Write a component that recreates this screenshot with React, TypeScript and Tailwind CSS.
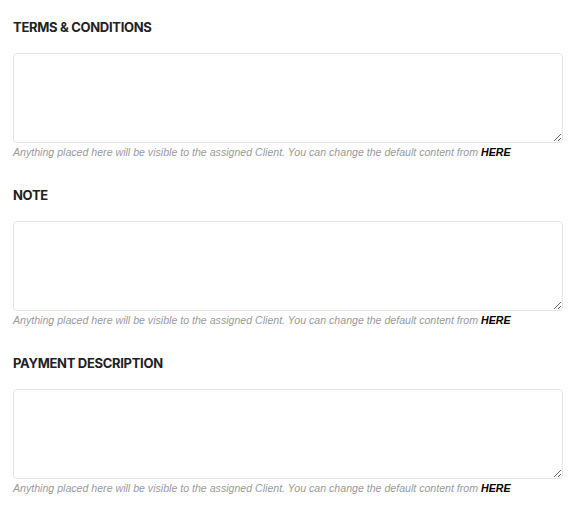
import React from "react";

const sections = ["TERMS & CONDITIONS", "NOTE", "PAYMENT DESCRIPTION"];

export default function App() {
  return (
    <div className="w-[576px] h-[510px] bg-white px-[13px] pt-[17px]" style={{ fontFamily: "'Liberation Sans', Arial, sans-serif" }}>
      {sections.map((s) => (
        <div key={s} className="mb-[25px]">
          <h3 className="font-['Inter'] text-[13px] leading-[20px] font-bold tracking-[-0.3px] text-[#222]">{s}</h3>
          <textarea className="mt-[16px] block w-full h-[90px] rounded-[4px] border border-[#e6e6e6] bg-white outline-none" />
          <p className="mt-[1px] text-[10.6px] leading-[16px] italic text-[#9a9a9a] whitespace-nowrap">
            Anything placed here will be visible to the assigned Client. You can change the default content from{" "}
            <span className="font-bold text-black">HERE</span>
          </p>
        </div>
      ))}
    </div>
  );
}
